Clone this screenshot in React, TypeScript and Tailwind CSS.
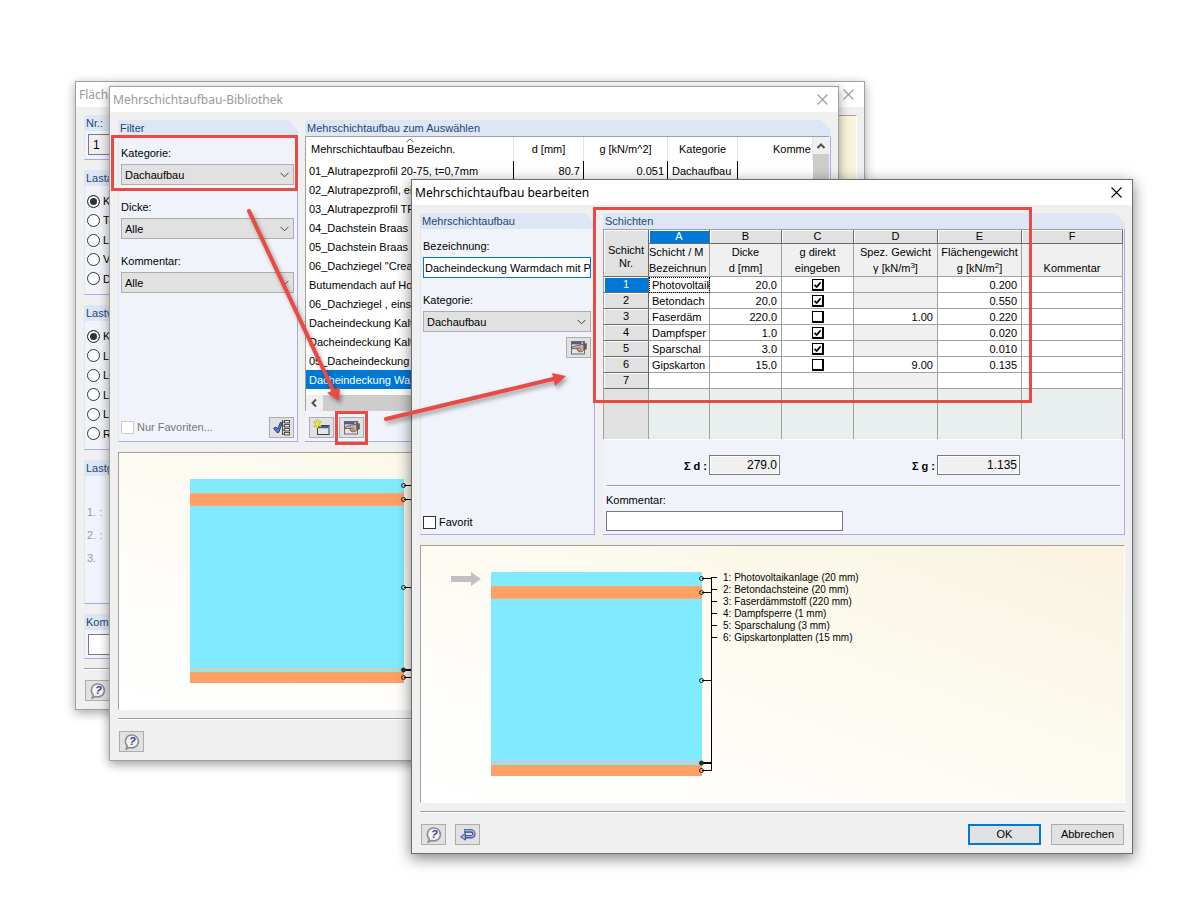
import React, { useState } from 'react';

interface Layer {
  name: string;
  thickness: string;
  direct: boolean;
  density: string;
  weight: string;
}

const layers: Layer[] = [
  { name: 'Photovoltaik', thickness: '20.0', direct: true, density: '', weight: '0.200' },
  { name: 'Betondach', thickness: '20.0', direct: true, density: '', weight: '0.550' },
  { name: 'Faserdäm', thickness: '220.0', direct: false, density: '1.00', weight: '0.220' },
  { name: 'Dampfsper', thickness: '1.0', direct: true, density: '', weight: '0.020' },
  { name: 'Sparschal', thickness: '3.0', direct: true, density: '', weight: '0.010' },
  { name: 'Gipskarton', thickness: '15.0', direct: false, density: '9.00', weight: '0.135' },
];

const legend = [
  'Photovoltaikanlage (20 mm)',
  'Betondachsteine (20 mm)',
  'Faserdämmstoff (220 mm)',
  'Dampfsperre (1 mm)',
  'Sparschalung (3 mm)',
  'Gipskartonplatten (15 mm)',
];

const library = [
  '01_Alutrapezprofil 20-75, t=0,7mm',
  '02_Alutrapezprofil, ein',
  '03_Alutrapezprofil TR',
  '04_Dachstein Braas "',
  '05_Dachstein Braas "',
  '06_Dachziegel "Creat',
  'Butumendach auf Hol',
  '06_Dachziegel , einsc',
  'Dacheindeckung Kalt',
  'Dacheindeckung Kalt',
  '05_Dacheindeckung',
  'Dacheindeckung Wa',
];

const CloseIcon = () => (
  <svg width="11" height="11" viewBox="0 0 11 11" stroke="currentColor" strokeWidth="1.1">
    <path d="M0.5 0.5 L10.5 10.5 M10.5 0.5 L0.5 10.5" />
  </svg>
);

const HelpIcon = () => (
  <svg width="18" height="18" viewBox="0 0 18 18">
    <path d="M9.2 2a6.4 6.4 0 1 1-2.4 12.4L3.4 16l.8-3.2A6.4 6.4 0 0 1 9.2 2z" fill="#f4f4f6" stroke="#8b8b90" strokeWidth="1.6" />
    <text x="9.4" y="12.4" textAnchor="middle" fontSize="11" fontWeight="bold" fontStyle="italic" fill="#2f4193" fontFamily="Liberation Sans, sans-serif">?</text>
  </svg>
);

const UndoIcon = () => (
  <svg width="18" height="18" viewBox="0 0 18 18" fill="none">
    <path d="M5 5h7a2.9 2.9 0 0 1 0 5.8H6" stroke="#34437c" strokeWidth="3.4" />
    <path d="M5.4 4.8h6.6a2.9 2.9 0 0 1 0 5.8H6" stroke="#9db0f2" strokeWidth="1.5" />
    <path d="M6.4 7.4v6.8L1.6 10.8z" fill="#9db0f2" stroke="#34437c" strokeWidth="0.9" />
  </svg>
);

const EditIcon = () => (
  <svg width="18" height="18" viewBox="0 0 18 18">
    <rect x="1.5" y="2.5" width="13" height="12.5" fill="#e4e4e6" stroke="#6a6b70" />
    <rect x="2" y="3" width="12" height="2.4" fill="#4a5f99" />
    <rect x="11.5" y="3.4" width="1.6" height="1.4" fill="#e8ecf8" />
    <path d="M1.6 8 L6 6.8 L10 5.8 L14 5.2 V10.8 L12 12.6 L9 12.8 L7 11 L8 9.6 L2 9.6z" fill="#d2b39a" stroke="#5c4a40" strokeWidth="0.8" />
    <path d="M6.5 9.4 L10.5 8.8 M8.6 11.4 L11.4 10.6" stroke="#6b564a" strokeWidth="0.8" />
    <path d="M13.6 4.6 L16.8 4.2 V10.2 L13.6 11z" fill="#5d5a5c" />
  </svg>
);

const NewIcon = () => (
  <svg width="18" height="18" viewBox="0 0 18 18">
    <rect x="4.5" y="6.5" width="11.5" height="9" fill="#e3e5ec" stroke="#3d4048" />
    <rect x="5" y="7" width="10.5" height="2.2" fill="#44598f" />
    <path d="M4.5 0.8v8.4M0.8 2.8l7.4 4.6M8.2 2.8L0.8 7.4" stroke="#8f8f20" strokeWidth="1.8" />
    <path d="M4.5 1.3v7.4M1.2 3l6.6 4.2M7.8 3L1.2 7.2" stroke="#f6f22a" strokeWidth="1.2" />
  </svg>
);

const TreeIcon = () => (
  <svg width="18" height="18" viewBox="0 0 18 18" fill="none">
    <path d="M9.5 1v15M9.5 3h2M9.5 7h2M9.5 11h2M9.5 15h2" stroke="#4c4c4c" />
    <g fill="#f2f2f2" stroke="#4c4c4c">
      <rect x="11.5" y="1.5" width="5" height="2.4" />
      <rect x="11.5" y="5.5" width="5" height="2.4" />
      <rect x="11.5" y="9.5" width="5" height="2.4" />
      <rect x="11.5" y="13.5" width="5" height="2.4" />
    </g>
    <path d="M0.6 9.4 L3 8 L4.6 10.2 L7.4 3.4 L9.2 4 L5.8 13.4 L4 13.6z" fill="#5b7be0" stroke="#1b2c72" strokeWidth="0.9" />
  </svg>
);

const ToolButton = ({ label, children }: { label: string; children: React.ReactNode }) => (
  <button aria-label={label} className="flex h-[21px] w-[25px] shrink-0 items-center justify-center border border-[#adadad] bg-[#e1e1e1]">
    {children}
  </button>
);

interface WindowProps {
  title: string;
  className: string;
  children: React.ReactNode;
}

const Window = ({ title, className, children }: WindowProps) => (
  <section className={`absolute flex flex-col border bg-[#f0f0f0] ${className}`}>
    <header className="flex h-[25px] shrink-0 items-center justify-between bg-white pr-[10px] pl-[3px]">
      <h2 className="font-['Noto_Sans'] text-[12px] leading-4">{title}</h2>
      <button aria-label="Schließen"><CloseIcon /></button>
    </header>
    <div className="flex flex-1 flex-col py-2 pr-[7px] pl-2 text-black">{children}</div>
  </section>
);

interface GroupProps {
  title: string;
  className?: string;
  bodyClass?: string;
  children?: React.ReactNode;
}

const Group = ({ title, className = '', bodyClass = '', children }: GroupProps) => (
  <div className={`flex flex-col ${className}`}>
    <h3 className="h-4 bg-[#dce6f4] pl-[2px] leading-4 text-[#1e4674] [clip-path:polygon(0_0,calc(100%-10px)_0,100%_10px,100%_100%,0_100%)]">
      {title}
    </h3>
    <div className={`flex flex-1 flex-col border-r border-b border-l border-r-[#a9a9ec] border-b-[#a9a9ec] border-l-[#dce6f8] bg-[#f0f4fa] ${bodyClass}`}>
      {children}
    </div>
  </div>
);

const Separator = () => <div className="h-[2px] shrink-0 border-b border-white bg-[#a0a0a0]" />;

const SelectField = ({ label, value }: { label: string; value: string }) => (
  <label className="flex flex-col gap-[3px] leading-4">
    {label}
    <span className="grid">
      <select className="col-start-1 row-start-1 h-[21px] appearance-none border border-[#adadad] bg-[#e1e1e1] pl-[3px]">
        <option>{value}</option>
      </select>
      <svg className="pointer-events-none col-start-1 row-start-1 mr-[5px] self-center justify-self-end" width="9" height="6" viewBox="0 0 9 6" fill="none" stroke="#444">
        <path d="M0.5 0.8 L4.5 4.8 L8.5 0.8" />
      </svg>
    </span>
  </label>
);

const RadioList = ({ name, items }: { name: string; items: string[] }) => (
  <div className="flex flex-1 flex-col justify-between">
    {items.map((item, i) => (
      <label key={i} className="flex items-center gap-[3px]">
        <input
          type="radio"
          name={name}
          defaultChecked={i === 0}
          className="size-[13px] appearance-none rounded-full border border-[#333] bg-white checked:bg-[#333] checked:shadow-[inset_0_0_0_2px_#fff]"
        />
        {item}
      </label>
    ))}
  </div>
);

// Cross section of the layers with the leader lines on the right edge
const CrossSection = ({ width, arrow }: { width: number; arrow?: boolean }) => {
  const right = 70 + width;
  return (
    <svg className="shrink-0" width={right + 16} height="256" viewBox={`0 0 ${right + 16} 256`}>
      {arrow && <path d="M30 30h20v-4l10 7-10 7v-4H30z" fill="#c0c0c0" />}
      <rect x="70" y="26" width={width} height="14" fill="#80ebff" />
      <rect x="70" y="40" width={width} height="13" fill="#ffa064" />
      <rect x="70" y="53" width={width} height="162" fill="#80ebff" />
      <rect x="70" y="215" width={width} height="2" fill="#dcc8b0" />
      <rect x="70" y="217" width={width} height="2" fill="#80ebff" />
      <rect x="70" y="219" width={width} height="11" fill="#ffa064" />
      <path d={`M70 40h${width}M70 53h${width}`} stroke="#d8cdb0" strokeWidth="0.6" />
      <g stroke="#000" fill="none" shapeRendering="crispEdges">
        {arrow && <path d={`M${right + 9.5} 31V225`} />}
        <path d={`M${right} 32.5h10M${right} 46.5h10M${right} 134.5h10M${right} 224.5h10`} />
        <path d={`M${right} 217h10`} strokeWidth="2" />
        {arrow && [31.5, 43.5, 55.5, 67.5, 79.5, 91.5].map(y => <path key={y} d={`M${right + 9} ${y}h6`} />)}
      </g>
      {[32.5, 46.5, 134.5, 217, 224.5].map(y => (
        <circle key={y} cx={right - 0.5} cy={y} r="2" fill={y === 217 ? '#333' : 'none'} stroke="#222" />
      ))}
    </svg>
  );
};

const previewClass =
  'flex h-[258px] items-start overflow-hidden border border-t-[#a0a0a0] border-r-white border-b-white border-l-[#a0a0a0] bg-[linear-gradient(to_top_right,#ffffff_0%,#fefdf9_30%,#fdfaf1_52%,#fbf8e9_75%,#f9f5e4_90%,#fcf2e0_94%,#fcf2e0_100%)]';

const SurfaceWindow = () => (
  <Window title="Fläche" className="top-[81px] left-[75px] w-[790px] border-[#a0a0a0] text-[#999] shadow-[0_3px_10px_rgba(0,0,0,0.35)]">
    <div className="flex flex-1 gap-2">
      <div className="flex w-[300px] flex-col gap-[10px]">
        <Group title="Nr.:" bodyClass="p-[3px] pb-1">
          <input aria-label="Nr." defaultValue="1" className="h-[21px] w-20 border border-[#7a7a7a] bg-[#f0f0f0] pl-1 text-[12px]" />
        </Group>
        <Group title="Lastart" className="h-[125px]" bodyClass="px-[2px] py-[7px]">
          <RadioList name="art" items={['K', 'Te', 'Lä', 'V', 'D']} />
        </Group>
        <Group title="Lastverlauf" className="h-[145px]" bodyClass="px-[2px] py-[7px]">
          <RadioList name="verlauf" items={['K', 'Li', 'Li', 'Li', 'Li', 'R']} />
        </Group>
        <Group title="Lastgröße" className="h-[144px]" bodyClass="gap-[7px] pt-7 pl-[2px] leading-4 text-[#999]">
          <span>1. :</span>
          <span>2. :</span>
          <span>3.</span>
        </Group>
        <Group title="Kommentar" bodyClass="p-[3px] pt-[4px]">
          <input aria-label="Kommentar" className="h-[21px] w-[200px] border border-[#7a7a7a] bg-white" />
        </Group>
      </div>
      <div className="flex-1 border-t border-r border-t-[#a0a0a0] border-r-white bg-[#fbf4dc]" />
    </div>
    <div className="mt-[9px] mb-[10px]"><Separator /></div>
    <div className="flex pl-px">
      <ToolButton label="Hilfe"><HelpIcon /></ToolButton>
    </div>
  </Window>
);

const LibraryTable = () => (
  <table className="h-[252px] w-full min-w-0 flex-1 table-fixed border-separate border-spacing-0 bg-white text-left">
    <colgroup>
      <col className="w-[208px]" />
      <col className="w-[70px]" />
      <col className="w-[84px]" />
      <col className="w-[70px]" />
      <col />
    </colgroup>
    <thead>
      <tr className="h-6 [&>th]:border-r [&>th]:border-[#e5e5e5] [&>th]:font-normal">
        <th className="relative pl-[5px]">
          Mehrschichtaufbau Bezeichn.
          <svg className="absolute top-[1px] left-[100px]" width="8" height="5" viewBox="0 0 8 5" fill="none" stroke="#555">
            <path d="M0.5 4.3 L4 0.8 L7.5 4.3" />
          </svg>
        </th>
        <th className="text-center">d [mm]</th>
        <th className="text-center">g [kN/m^2]</th>
        <th className="text-center">Kategorie</th>
        <th className="pl-[35px]">Komme</th>
      </tr>
    </thead>
    <tbody>
      {library.map((name, i) => (
        <tr
          key={i}
          className={`h-[19px] [&>td]:border-r [&>td]:border-black [&>td]:pt-px ${i === library.length - 1 ? 'bg-[#0078d7] text-white' : ''}`}
        >
          <td className="pl-[3px] whitespace-nowrap">{name}</td>
          <td className="pr-[3px] text-right">{i === 0 && '80.7'}</td>
          <td className="pr-[3px] text-right">{i === 0 && '0.051'}</td>
          <td className="pl-1">{i === 0 && 'Dachaufbau'}</td>
          <td className="border-r-0!"></td>
        </tr>
      ))}
    </tbody>
  </table>
);

const LibraryWindow = () => (
  <Window title="Mehrschichtaufbau-Bibliothek" className="top-[86px] left-[109px] w-[730px] border-[#a0a0a0] text-[#999] shadow-[0_3px_10px_rgba(0,0,0,0.4)]">
    <div className="flex h-[322px] gap-[7px]">
      <Group title="Filter" className="w-[180px]" bodyClass="gap-[14px] pt-[9px] pr-[3px] pb-[3px] pl-[2px]">
        <SelectField label="Kategorie:" value="Dachaufbau" />
        <SelectField label="Dicke:" value="Alle" />
        <SelectField label="Kommentar:" value="Alle" />
        <div className="mt-auto flex items-center justify-between">
          <label className="flex items-center gap-[3px] text-[#777]">
            <input type="checkbox" disabled className="size-[13px] appearance-none border border-[#ccc] bg-white" />
            Nur Favoriten...
          </label>
          <ToolButton label="Favoriten wählen"><TreeIcon /></ToolButton>
        </div>
      </Group>
      <Group title="Mehrschichtaufbau zum Auswählen" className="min-w-0 flex-1" bodyClass="border-l-0! pr-px">
        <div className="flex h-[275px] flex-col border-t border-l border-[#a0a0a0] bg-white">
          <div className="flex">
            <LibraryTable />
            <div className="flex w-4 shrink-0 flex-col bg-[#f0f0f0]">
              <svg className="h-[17px] w-4 shrink-0" viewBox="0 0 16 17" fill="none" stroke="#505050" strokeWidth="2">
                <path d="M4.5 11 L8 7.5 L11.5 11" />
              </svg>
              <div className="flex-1 bg-[#cdcdcd]" />
            </div>
          </div>
          <div className="mt-auto flex h-4 bg-[#f0f0f0]">
            <svg className="h-4 w-[17px] shrink-0" viewBox="0 0 17 16" fill="none" stroke="#505050" strokeWidth="2">
              <path d="M10 4.5 L6.5 8 L10 11.5" />
            </svg>
            <div className="w-[300px] bg-[#cdcdcd]" />
          </div>
        </div>
        <div className="mt-auto flex gap-[5px] pb-[3px] pl-1">
          <ToolButton label="Neu"><NewIcon /></ToolButton>
          <ToolButton label="Bearbeiten"><EditIcon /></ToolButton>
        </div>
      </Group>
    </div>
    <div className={`mt-[10px] pl-px ${previewClass}`}>
      <CrossSection width={214} />
    </div>
    <div className="mt-2 mb-[11px]"><Separator /></div>
    <div className="flex pl-px">
      <ToolButton label="Hilfe"><HelpIcon /></ToolButton>
    </div>
  </Window>
);

const LayerCheckbox = ({ checked, label }: { checked: boolean; label: string }) => {
  const [on, setOn] = useState(checked);
  return (
    <span className="grid place-items-center">
      <input
        type="checkbox"
        aria-label={label}
        checked={on}
        onChange={e => setOn(e.target.checked)}
        className="col-start-1 row-start-1 size-3 appearance-none border border-r-2 border-b-2 border-black bg-white"
      />
      {on && (
        <svg className="pointer-events-none col-start-1 row-start-1" width="10" height="10" viewBox="0 0 10 10" fill="none" stroke="#000" strokeWidth="1.8">
          <path d="M1.5 4.8 L3.6 7 L7.6 2.4" />
        </svg>
      )}
    </span>
  );
};

const LayerTable = () => (
  <table className="w-full table-fixed border-separate border-spacing-0 border-t border-l border-[#a0a0a0] leading-[13px] [&_td]:border-r [&_td]:border-[#a0a0a0] [&_th]:border-r [&_th]:font-normal">
    <colgroup>
      <col className="w-[45px]" />
      <col className="w-[61px]" />
      <col className="w-[72px]" />
      <col className="w-[72px]" />
      <col className="w-[84px]" />
      <col className="w-[84px]" />
      <col />
    </colgroup>
    <thead>
      <tr className="h-[14px]">
        <th rowSpan={2} className="border-b border-[#696969] bg-[#e1e1e1] pt-2 shadow-[inset_1px_1px_0_#fff]">Schicht<br />Nr.</th>
        {['A', 'B', 'C', 'D', 'E', 'F'].map(c => (
          <th
            key={c}
            className={`border-b border-[#696969] shadow-[inset_1px_1px_0_#fff] ${c === 'A' ? 'bg-[#0078d7] text-white' : 'bg-[#e1e1e1]'}`}
          >
            {c}
          </th>
        ))}
      </tr>
      <tr className="h-[33px] bg-[#f0f0f0] leading-4 [&>th]:border-b [&>th]:border-[#a0a0a0] [&>th]:align-top [&>th]:whitespace-nowrap">
        <th className="overflow-hidden text-left">Schicht / M<br />Bezeichnun</th>
        <th>Dicke<br />d [mm]</th>
        <th>g direkt<br />eingeben</th>
        <th>Spez. Gewicht<br />γ [kN/m<sup className="text-[8px] leading-none">3</sup>]</th>
        <th>Flächengewicht<br />g [kN/m<sup className="text-[8px] leading-none">2</sup>]</th>
        <th><br />Kommentar</th>
      </tr>
    </thead>
    <tbody>
      {layers.map((l, i) => (
        <tr key={l.name} className="h-4 bg-white text-right [&>td]:border-b [&>td]:pt-px">
          <th className={`border-b border-[#696969] text-center shadow-[inset_1px_1px_0_#fff] ${i === 0 ? 'bg-[#0078d7] text-white' : 'bg-[#e1e1e1]'}`}>
            {i + 1}
          </th>
          <td className={`overflow-hidden pl-[3px] text-left whitespace-nowrap ${i === 0 ? 'outline-1 -outline-offset-1 outline-black outline-dotted' : ''}`}>{l.name}</td>
          <td className="pr-1">{l.thickness}</td>
          <td><LayerCheckbox checked={l.direct} label={`g direkt eingeben, Schicht ${i + 1}`} /></td>
          <td className={`pr-1 ${l.density ? '' : 'bg-[#f0f0f0]'}`}>{l.density}</td>
          <td className="pr-1">{l.weight}</td>
          <td></td>
        </tr>
      ))}
      <tr className="h-4 bg-white [&>td]:border-b">
        <th className="border-b border-[#696969] bg-[#e1e1e1] shadow-[inset_1px_1px_0_#fff]">7</th>
        <td></td>
        <td></td>
        <td></td>
        <td className="bg-[#f0f0f0]"></td>
        <td></td>
        <td></td>
      </tr>
      <tr className="h-[50px] bg-[#e8efee]">
        <td className="bg-[#e1e1e1]"></td>
        <td></td>
        <td></td>
        <td></td>
        <td></td>
        <td></td>
        <td></td>
      </tr>
    </tbody>
  </table>
);

const sumClass = 'h-5 border border-[#7a7a7a] bg-[#f0f0f0] pr-[2px] text-right text-[12px] shadow-[inset_0_0_0_1px_#fff]';

const EditWindow = () => (
  <Window title="Mehrschichtaufbau bearbeiten" className="top-[179px] left-[411px] w-[722px] border-[#6f6f6f] text-black shadow-[0_4px_14px_rgba(0,0,0,0.5)]">
    <div className="flex h-[322px] gap-2">
      <Group title="Mehrschichtaufbau" className="w-[175px]" bodyClass="pt-[9px] pr-[3px] pb-[5px] pl-[2px]">
        <label className="mb-[14px] flex flex-col gap-[3px] leading-4">
          Bezeichnung:
          <input defaultValue="Dacheindeckung Warmdach mit P" className="h-[21px] border border-[#0078d7] bg-white pl-px" />
        </label>
        <SelectField label="Kategorie:" value="Dachaufbau" />
        <div className="mt-[5px] flex justify-end">
          <ToolButton label="Kategorie bearbeiten"><EditIcon /></ToolButton>
        </div>
        <label className="mt-auto flex items-center gap-[3px] leading-[13px]">
          <input type="checkbox" className="size-[13px] appearance-none border border-[#333] bg-white" />
          Favorit
        </label>
      </Group>
      <Group title="Schichten" className="min-w-0 flex-1" bodyClass="border-l-0! pr-px">
        <LayerTable />
        <div className="flex h-[56px] shrink-0 border-t border-white pt-[15px]">
          <label htmlFor="sumD" className="w-[106px] pt-[3px] pr-[2px] text-right leading-4 font-bold">Σ d :</label>
          <input id="sumD" readOnly value="279.0" className={`w-[71px] ${sumClass}`} />
          <label htmlFor="sumG" className="w-[157px] pt-[3px] pr-[2px] text-right leading-4 font-bold">Σ g :</label>
          <input id="sumG" readOnly value="1.135" className={`w-[83px] ${sumClass}`} />
        </div>
        <div className="-mt-[10px] flex flex-1 flex-col pr-[3px] pl-[3px]">
          <Separator />
          <label className="mt-[5px] flex flex-col gap-[3px] leading-4">
            Kommentar:
            <input className="h-5 w-[237px] border border-[#7a7a7a] bg-white" />
          </label>
        </div>
      </Group>
    </div>
    <div className={`mt-[10px] ${previewClass}`}>
      <CrossSection width={211} arrow />
      <ol className="pt-[26px] pl-[5px] text-[10px] leading-3">
        {legend.map((text, i) => <li key={text}>{i + 1}: {text}</li>)}
      </ol>
    </div>
    <div className="mt-2 mb-[11px]"><Separator /></div>
    <div className="flex items-center pr-px pl-px">
      <ToolButton label="Hilfe"><HelpIcon /></ToolButton>
      <div className="ml-[9px]"><ToolButton label="Rückgängig"><UndoIcon /></ToolButton></div>
      <div className="ml-auto flex gap-[10px]">
        <button className="h-[21px] w-[73px] border-2 border-[#0078d7] bg-[#e1e1e1]">OK</button>
        <button className="h-[21px] w-[73px] border border-[#adadad] bg-[#e1e1e1]">Abbrechen</button>
      </div>
    </div>
  </Window>
);

// Red frames and arrows drawn above the windows
const Markers = () => (
  <svg className="pointer-events-none absolute top-0 left-0 drop-shadow-[2px_3px_2px_rgba(0,0,0,0.35)]" width="1200" height="900" viewBox="0 0 1200 900" fill="none" stroke="#ea4a42">
    <path d="M249 211 L333 390 M386 419 L553 379" strokeWidth="4" strokeLinecap="round" />
    <path d="M339 401 L327 393 L340 387z M566 376 L552 373 L555 386z" fill="#ea4a42" stroke="none" />
  </svg>
);

const frameClass = 'pointer-events-none absolute border-3 border-[#ea4a42]';

const App: React.FC = () => {
  return (
    <main className="relative min-h-screen overflow-hidden bg-white font-['Liberation_Sans',Arial,sans-serif] text-[11px]">
      <SurfaceWindow />
      <LibraryWindow />
      <EditWindow />
      <div className={`top-[135px] left-[111px] h-[56px] w-[187px] ${frameClass}`} />
      <div className={`top-[411px] left-[335px] h-[34px] w-[33px] ${frameClass}`} />
      <div className={`top-[207px] left-[593px] h-[196px] w-[439px] ${frameClass}`} />
      <Markers />
    </main>
  );
};

export default App;
